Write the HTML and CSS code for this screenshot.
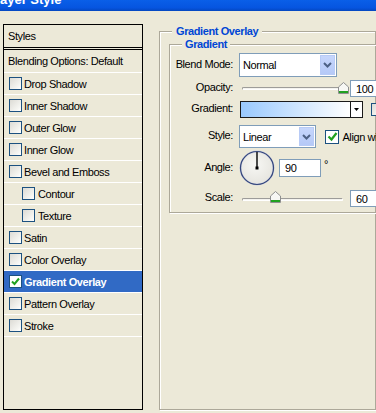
FILE: index.html
```html
<!doctype html>
<html>
<head>
	<meta charset="utf-8"/>
	<title>Layer Style</title>
	<link rel="stylesheet" href="styles.css">
</head>
<body>
	<div class="titlebar"><span class="title">Layer Style</span></div>

	<div class="main">
		<div class="styles-list">
			<div class="list-head">Styles</div>
			<div class="item blending">Blending Options: Default</div>
			<div class="item"><span class="check"></span>Drop Shadow</div>
			<div class="item"><span class="check"></span>Inner Shadow</div>
			<div class="item"><span class="check"></span>Outer Glow</div>
			<div class="item"><span class="check"></span>Inner Glow</div>
			<div class="item"><span class="check"></span>Bevel and Emboss</div>
			<div class="item sub"><span class="check"></span>Contour</div>
			<div class="item sub"><span class="check"></span>Texture</div>
			<div class="item"><span class="check"></span>Satin</div>
			<div class="item"><span class="check"></span>Color Overlay</div>
			<div class="item selected"><span class="check on"><svg width="9" height="9" viewBox="0 0 9 9"><path d="M1 4.5 L3.5 7 L8 1.5" fill="none" stroke="#21a121" stroke-width="2"/></svg></span>Gradient Overlay</div>
			<div class="item"><span class="check"></span>Pattern Overlay</div>
			<div class="item"><span class="check"></span>Stroke</div>
		</div>

		<fieldset class="group outer">
			<legend>Gradient Overlay</legend>
			<fieldset class="group inner">
				<legend>Gradient</legend>

				<div class="row row-blend">
					<label>Blend Mode:</label>
					<div class="select blend-select">
						<span class="select-text">Normal</span>
						<span class="drop"><svg width="9" height="6" viewBox="0 0 9 6"><path d="M1 1 L4.5 4.5 L8 1" fill="none" stroke="#4d6185" stroke-width="2"/></svg></span>
					</div>
				</div>

				<div class="row row-opacity">
					<label>Opacity:</label>
					<div class="slider">
						<div class="track"></div>
						<svg class="thumb" style="left: 99px" width="11" height="12" viewBox="0 0 11 12"><path d="M5.5 0.5 L10.5 5 L10.5 11.5 L0.5 11.5 L0.5 5 Z" fill="#f7f7f4" stroke="#8e8f8f"/><rect x="1" y="9" width="9" height="2" fill="#21a121"/></svg>
					</div>
					<div class="field num-field">100</div>
				</div>

				<div class="row row-gradient">
					<label>Gradient:</label>
					<div class="gradient-box">
						<div class="gradient-fill"></div>
						<div class="gradient-drop"><svg width="5" height="3" viewBox="0 0 5 3"><path d="M0 0 L5 0 L2.5 3 Z" fill="#000"/></svg></div>
					</div>
					<span class="check reverse"></span>
				</div>

				<div class="row row-style">
					<label>Style:</label>
					<div class="select style-select">
						<span class="select-text">Linear</span>
						<span class="drop"><svg width="9" height="6" viewBox="0 0 9 6"><path d="M1 1 L4.5 4.5 L8 1" fill="none" stroke="#4d6185" stroke-width="2"/></svg></span>
					</div>
					<span class="check align-check"><svg width="11" height="11" viewBox="0 0 11 11"><path d="M1.5 5.5 L4.5 8.5 L9.5 2" fill="none" stroke="#21a121" stroke-width="2.2"/></svg></span>
					<span class="align-label">Align with layer</span>
				</div>

				<div class="row row-angle">
					<label>Angle:</label>
					<svg class="dial" width="36" height="36" viewBox="0 0 36 36">
						<defs>
							<radialGradient id="dialfill" cx="0.45" cy="0.4" r="0.6">
								<stop offset="0" stop-color="#f7f7f4"/>
								<stop offset="1" stop-color="#e6e5df"/>
							</radialGradient>
						</defs>
						<circle cx="18" cy="18" r="16.5" fill="url(#dialfill)" stroke="#c9cde0" stroke-width="2"/>
						<circle cx="18" cy="18" r="16.5" fill="none" stroke="#34467a" stroke-width="1.2"/>
						<line x1="18" y1="18" x2="18" y2="2" stroke="#000" stroke-width="1.4"/>
						<rect x="16.5" y="16.5" width="3" height="3" fill="#000"/>
					</svg>
					<div class="field angle-field">90</div>
					<span class="degree">&deg;</span>
				</div>

				<div class="row row-scale">
					<label>Scale:</label>
					<div class="slider">
						<div class="track"></div>
						<svg class="thumb" style="left: 31px" width="11" height="12" viewBox="0 0 11 12"><path d="M5.5 0.5 L10.5 5 L10.5 11.5 L0.5 11.5 L0.5 5 Z" fill="#f7f7f4" stroke="#8e8f8f"/><rect x="1" y="9" width="9" height="2" fill="#21a121"/></svg>
					</div>
					<div class="field num-field">60</div>
				</div>
			</fieldset>
		</fieldset>
	</div>
</body>
</html>
```

FILE: styles.css
```css
html, body {
	margin: 0;
	overflow: hidden;
}
body {
	background: #ece9d8;
	font-family: "Liberation Sans", Arial, sans-serif;
	font-size: 11px;
	letter-spacing: -0.4px;
	color: #000;
	width: 376px;
	height: 413px;
}

/* title bar */
.titlebar {
	height: 11px;
	overflow: hidden;
	background: linear-gradient(#0a5fe8, #0655e0 70%, #0447c0);
}
.title {
	display: block;
	margin: -8px 0 0 -8px;
	line-height: 15px;
	font-size: 13px;
	font-weight: bold;
	letter-spacing: 0;
	color: #fff;
	white-space: nowrap;
}

.main {
	display: flex;
	align-items: flex-start;
	padding: 13px 0 0 3px;
	gap: 16px;
}

/* styles list */
.styles-list {
	width: 138px;
	height: 384px;
	border: 1px solid #000;
	flex-shrink: 0;
}
.list-head {
	height: 22px;
	line-height: 22px;
	padding-left: 4px;
	border-bottom: 3px double #000;
}
.item {
	display: flex;
	align-items: center;
	height: 21px;
	border-bottom: 1px solid #fff;
	padding-left: 5px;
	white-space: nowrap;
}
.item.blending {
	height: 22px;
	padding-left: 4px;
}
.item.sub {
	padding-left: 18px;
}
.item.sub .check {
	margin-right: 3px;
}
.item.selected {
	background: #316ac5;
	color: #fff;
	font-weight: bold;
}
.check {
	display: inline-flex;
	align-items: center;
	justify-content: center;
	width: 11px;
	height: 11px;
	border: 1px solid #1c5180;
	background: linear-gradient(135deg, #dcdbd5, #f4f4f0 70%, #fff);
	margin-right: 2px;
	flex-shrink: 0;
}
.check.on {
	background: #fff;
}

/* group boxes */
.group {
	margin: 0;
	border: 1px solid #aca899;
	box-shadow: inset 1px 1px 0 #fff, 1px 1px 0 #fff;
	min-width: 0;
}
.group legend {
	font-weight: bold;
	color: #0046d5;
	line-height: 14px;
	background: #ece9d8;
}
.outer {
	width: 260px;
	height: 386px;
	box-sizing: border-box;
	padding: 0 0 0 9px;
}
.outer legend {
	margin-left: 3px;
	padding: 0 4px;
}
.inner {
	width: 240px;
	margin-top: -1px;
	padding: 0 0 5px 0;
}
.inner legend {
	margin-left: 12px;
	padding: 0 3px;
}

/* rows */
.row {
	display: flex;
	align-items: center;
}
.row label {
	width: 63px;
	text-align: right;
	margin-right: 6px;
	padding-bottom: 3px;
	flex-shrink: 0;
}
.row-blend {
	height: 24px;
	margin-top: 2px;
}
.row-opacity {
	height: 17px;
	margin-top: 3px;
}
.row-gradient {
	height: 17px;
	margin-top: 4px;
}
.row-style {
	height: 23px;
	margin-top: 7px;
}
.row-angle {
	height: 36px;
	margin-top: 2px;
}
.row-scale {
	height: 17px;
	margin-top: 4px;
}

/* select */
.select {
	display: flex;
	align-items: stretch;
	height: 100%;
	box-sizing: border-box;
	border: 1px solid #7f9db9;
	background: #fff;
	padding: 1px;
}
.select-text {
	flex: 1;
	display: flex;
	align-items: center;
	padding-left: 2px;
}
.drop {
	width: 15px;
	display: flex;
	align-items: center;
	justify-content: center;
	background: linear-gradient(#c6d6fc, #b5c9f7);
	border: 1px solid #b8cbf6;
	box-sizing: border-box;
}
.blend-select {
	width: 98px;
}
.style-select {
	width: 79px;
}

/* slider */
.slider {
	position: relative;
	width: 108px;
	height: 100%;
	flex-shrink: 0;
}
.track {
	position: absolute;
	left: 3px;
	right: 4px;
	top: 7px;
	height: 1px;
	border: 1px solid #9d9c99;
	border-bottom-color: #fff;
	border-right-color: #fff;
	background: #f4f3ee;
	border-radius: 2px;
}
.row-scale .track {
	top: 8px;
}
.thumb {
	position: absolute;
	top: 2px;
}
.row-scale .thumb {
	top: 1px;
}

/* fields */
.field {
	height: 100%;
	box-sizing: border-box;
	border: 1px solid #7f9db9;
	background: #fff;
	display: flex;
	align-items: center;
	padding-left: 5px;
}
.num-field {
	width: 40px;
	margin-left: 3px;
}
.angle-field {
	width: 42px;
	height: 18px;
	margin-left: 4px;
}
.degree {
	align-self: flex-start;
	margin: 8px 0 0 3px;
}

/* gradient */
.gradient-box {
	display: flex;
	width: 123px;
	height: 100%;
	box-sizing: border-box;
	margin-left: 1px;
	border: 1px solid #1a1a1a;
	flex-shrink: 0;
}
.gradient-fill {
	flex: 1;
	background: linear-gradient(to right, #99c9fe, #fff);
	border-right: 1px solid #1a1a1a;
}
.gradient-drop {
	width: 11px;
	background: #fff;
	display: flex;
	align-items: center;
	justify-content: center;
}
.check.reverse {
	margin-left: 8px;
}

.align-check {
	width: 12px;
	height: 12px;
	margin-left: 9px;
	background: #fff;
}
.align-label {
	margin-left: 1px;
	white-space: nowrap;
}
.dial {
	flex-shrink: 0;
}
```
